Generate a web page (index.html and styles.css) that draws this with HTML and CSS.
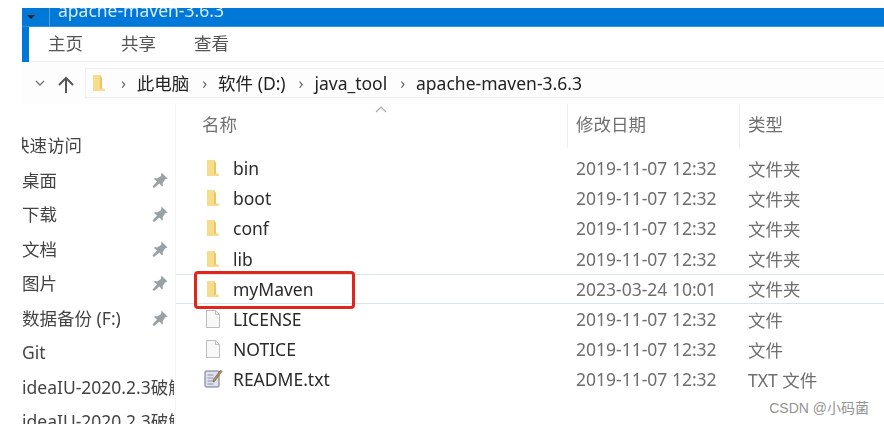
FILE: index.html
```html
<!DOCTYPE html>
<html lang="zh-CN">
<head>
  <meta charset="UTF-8">
  <title>apache-maven-3.6.3</title>
  <link rel="stylesheet" href="styles.css">
</head>
<body>
  <svg class="defs" width="0" height="0">
    <symbol id="folder" viewBox="0 0 14 18">
      <path d="M1 1h7l2 3v10l3 1v2H1z" fill="#f7dc8c"/>
      <path d="M8 1l2 3v10l-2 2z" fill="#eec566"/>
    </symbol>
    <symbol id="pin" viewBox="0 0 16 16">
      <path d="M9.500 .5l6 6-2.500 1-2.500 4 .5 2-1 1-2.500-3L2 16 .5 14.500l4.500-5-3-2.500 1-1 2 .5 4-2.500z" fill="#9aa1a5"/>
    </symbol>
  </svg>

  <div class="window">
    <div class="titlebar">
      <span class="titlebar-arrow"></span>
      <span class="titlebar-sep"></span>
      <span class="titlebar-text">apache-maven-3.6.3</span>
    </div>

    <div class="ribbon">
      <span class="tab">主页</span>
      <span class="tab">共享</span>
      <span class="tab">查看</span>
    </div>

    <div class="navbar">
      <svg class="nav-down" width="10" height="6" viewBox="0 0 10 6"><path d="M1 1l4 4 4-4" fill="none" stroke="#777" stroke-width="1.4"/></svg>
      <svg class="nav-up" width="18" height="18" viewBox="0 0 18 18"><path d="M9 17V2M2 9l7-7 7 7" fill="none" stroke="#555" stroke-width="2"/></svg>
      <div class="address">
        <svg class="address-folder" width="14" height="18"><use href="#folder"/></svg>
        <span class="crumb-sep">›</span><span>此电脑</span>
        <span class="crumb-sep">›</span><span>软件 (D:)</span>
        <span class="crumb-sep">›</span><span>java_tool</span>
        <span class="crumb-sep">›</span><span>apache-maven-3.6.3</span>
      </div>
    </div>

    <div class="main">
      <ul class="sidebar">
        <li class="side-clip"><span>快速访问</span></li>
        <li><span>桌面</span><svg width="16" height="16"><use href="#pin"/></svg></li>
        <li><span>下载</span><svg width="16" height="16"><use href="#pin"/></svg></li>
        <li><span>文档</span><svg width="16" height="16"><use href="#pin"/></svg></li>
        <li><span>图片</span><svg width="16" height="16"><use href="#pin"/></svg></li>
        <li><span>数据备份 (F:)</span><svg width="16" height="16"><use href="#pin"/></svg></li>
        <li><span>Git</span></li>
        <li><span class="side-long">ideaIU-2020.2.3破解</span></li>
        <li><span class="side-long">ideaIU-2020.2.3破解</span></li>
      </ul>

      <div class="files">
        <div class="file-head">
          <span class="head-name">名称</span>
          <svg class="sort-caret" width="12" height="7" viewBox="0 0 12 7"><path d="M1 6l5-5 5 5" fill="none" stroke="#aaa" stroke-width="1.2"/></svg>
          <span class="head-date">修改日期</span>
          <span class="head-type">类型</span>
        </div>

        <div class="row">
          <span class="col-name"><svg width="14" height="18"><use href="#folder"/></svg>bin</span>
          <span class="col-date">2019-11-07 12:32</span><span class="col-type">文件夹</span>
        </div>
        <div class="row">
          <span class="col-name"><svg width="14" height="18"><use href="#folder"/></svg>boot</span>
          <span class="col-date">2019-11-07 12:32</span><span class="col-type">文件夹</span>
        </div>
        <div class="row">
          <span class="col-name"><svg width="14" height="18"><use href="#folder"/></svg>conf</span>
          <span class="col-date">2019-11-07 12:32</span><span class="col-type">文件夹</span>
        </div>
        <div class="row">
          <span class="col-name"><svg width="14" height="18"><use href="#folder"/></svg>lib</span>
          <span class="col-date">2019-11-07 12:32</span><span class="col-type">文件夹</span>
        </div>
        <div class="row row-selected">
          <span class="col-name"><svg width="14" height="18"><use href="#folder"/></svg>myMaven</span>
          <span class="col-date">2023-03-24 10:01</span><span class="col-type">文件夹</span>
          <span class="red-box"></span>
        </div>
        <div class="row">
          <span class="col-name">
            <svg width="14" height="18" viewBox="0 0 14 18"><path d="M.5.5h9l4 4v13H.5z" fill="#f8f8f8" stroke="#bdbdbd"/><path d="M9.500.5v4h4" fill="none" stroke="#bdbdbd"/></svg>LICENSE
          </span>
          <span class="col-date">2019-11-07 12:32</span><span class="col-type">文件</span>
        </div>
        <div class="row">
          <span class="col-name">
            <svg width="14" height="18" viewBox="0 0 14 18"><path d="M.5.5h9l4 4v13H.5z" fill="#f8f8f8" stroke="#bdbdbd"/><path d="M9.500.5v4h4" fill="none" stroke="#bdbdbd"/></svg>NOTICE
          </span>
          <span class="col-date">2019-11-07 12:32</span><span class="col-type">文件</span>
        </div>
        <div class="row">
          <span class="col-name">
            <svg class="txt-icon" width="19" height="20" viewBox="0 0 19 20"><rect x="1" y="2" width="14" height="16" rx="1" fill="#dfe2ee" stroke="#6d7389"/><path d="M3.500 6h6M3.500 9h6M3.500 12h6M3.500 15h6" stroke="#8d93a8"/><path d="M16.500 1l1.500 1.500L11 12l-2 1 .4-2.400z" fill="#b98a56" stroke="#5c5c5c" stroke-width=".6"/></svg>README.txt
          </span>
          <span class="col-date">2019-11-07 12:32</span><span class="col-type">TXT 文件</span>
        </div>
      </div>
    </div>
  </div>

  <div class="watermark">CSDN @小码菌</div>
</body>
</html>
```

FILE: styles.css
```css
html, body {
  margin: 0;
  padding: 0;
  height: 100%;
  overflow: hidden;
  background: #fff;
}

body {
  font-family: "Noto Sans", "Noto Sans CJK SC", sans-serif;
  font-size: 17.5px;
  color: #333;
}

.defs {
  position: absolute;
}

.window {
  margin: 8px 0 0 22px;
  height: 417px;
  overflow: hidden;
  filter: blur(0.5px);
}

/* title bar */
.titlebar {
  height: 18px;
  background: #0078d7;
  border-bottom: 1px solid #2f93dc;
  display: flex;
  align-items: flex-end;
  overflow: hidden;
}

.titlebar-arrow {
  width: 0;
  height: 0;
  margin: 0 0 7px 5px;
  border-left: 4px solid transparent;
  border-right: 4px solid transparent;
  border-top: 4px solid #222;
}

.titlebar-sep {
  width: 1px;
  height: 18px;
  margin-left: 14px;
  background: #4f9fdc;
}

.titlebar-text {
  margin-left: 8px;
  line-height: 18px;
  height: 18px;
  position: relative;
  top: -7px;
  color: #d6eafa;
  white-space: nowrap;
}

/* ribbon */
.ribbon {
  height: 32px;
  padding: 0 0 2px 19px;
  margin-left: 7px;
  display: flex;
  gap: 38px;
  align-items: center;
  box-shadow: -7px 0 0 #0078d7;
  border-bottom: 1px solid #eeeeee;
}

.tab {
  color: #555;
  line-height: 32px;
}

/* address bar */
.navbar {
  height: 42px;
  display: flex;
  align-items: center;
  background: #fdfdfd;
}

.nav-down {
  margin-left: 13px;
}

.nav-up {
  margin-left: 12px;
  margin-top: 3px;
}

.address {
  flex: 1;
  height: 27px;
  margin-left: 10px;
  padding: 0 0 1px 6px;
  border: 1px solid #efefef;
  border-right: 0;
  display: flex;
  align-items: center;
  color: #222;
  white-space: nowrap;
}

.crumb-sep {
  width: 28.800px;
  padding-left: 13px;
  box-sizing: border-box;
  color: #666;
  font-size: 16px;
}

.address-folder {
  margin-right: 2px;
}

/* main area */
.main {
  display: flex;
  height: 320px;
}

.sidebar {
  list-style: none;
  margin: 0;
  padding: 24px 0 0;
  width: 154px;
  box-sizing: border-box;
  border-right: 1px solid #f4f4f4;
  overflow: hidden;
  flex: none;
}

.sidebar li {
  height: 34.500px;
  line-height: 34.500px;
  display: flex;
  align-items: center;
  justify-content: space-between;
  padding-right: 7px;
  color: #444;
  white-space: nowrap;
}

.sidebar li svg {
  flex: none;
}

.side-clip span {
  margin-left: -10px;
}

.sidebar .side-long {
  width: 152px;
  overflow: hidden;
  flex: none;
}

.files {
  flex: 1;
  min-width: 0;
}

.file-head {
  height: 49px;
  display: flex;
  position: relative;
  color: #707070;
}

.file-head span {
  line-height: 41px;
  height: 44px;
  box-sizing: border-box;
}

.head-name {
  width: 391px;
  padding-left: 26px;
}

.head-date {
  width: 172px;
  padding-left: 8px;
  border-left: 1px solid #eee;
}

.head-type {
  padding-left: 8px;
  border-left: 1px solid #eee;
}

.sort-caret {
  position: absolute;
  left: 199px;
  top: 2px;
}

.row {
  height: 30.200px;
  display: flex;
  align-items: center;
  position: relative;
  box-sizing: border-box;
  white-space: nowrap;
}

.col-name {
  width: 400px;
  flex: none;
  display: flex;
  align-items: center;
  box-sizing: border-box;
  padding-left: 30px;
  color: #2b2b2b;
}

.col-name svg {
  margin-right: 13px;
  flex: none;
}

.col-name .txt-icon {
  margin-left: -2px;
  margin-right: 10px;
}

.col-date {
  width: 172px;
  flex: none;
  color: #6e6e6e;
  box-sizing: border-box;
}

.col-type {
  color: #6e6e6e;
}

.row-selected {
  border-top: 1px solid #d5e6ea;
  border-bottom: 1px solid #d5e6ea;
}

/* annotation drawn over the screenshot */
.red-box {
  position: absolute;
  left: 18px;
  top: -4px;
  width: 155px;
  height: 32px;
  border: 3px solid #e0261c;
  border-radius: 4px;
}

.watermark {
  position: absolute;
  right: 15px;
  bottom: 8px;
  font-size: 14px;
  line-height: 18px;
  color: #949494;
  font-family: "Liberation Sans", "Noto Sans CJK SC", sans-serif;
}
```
